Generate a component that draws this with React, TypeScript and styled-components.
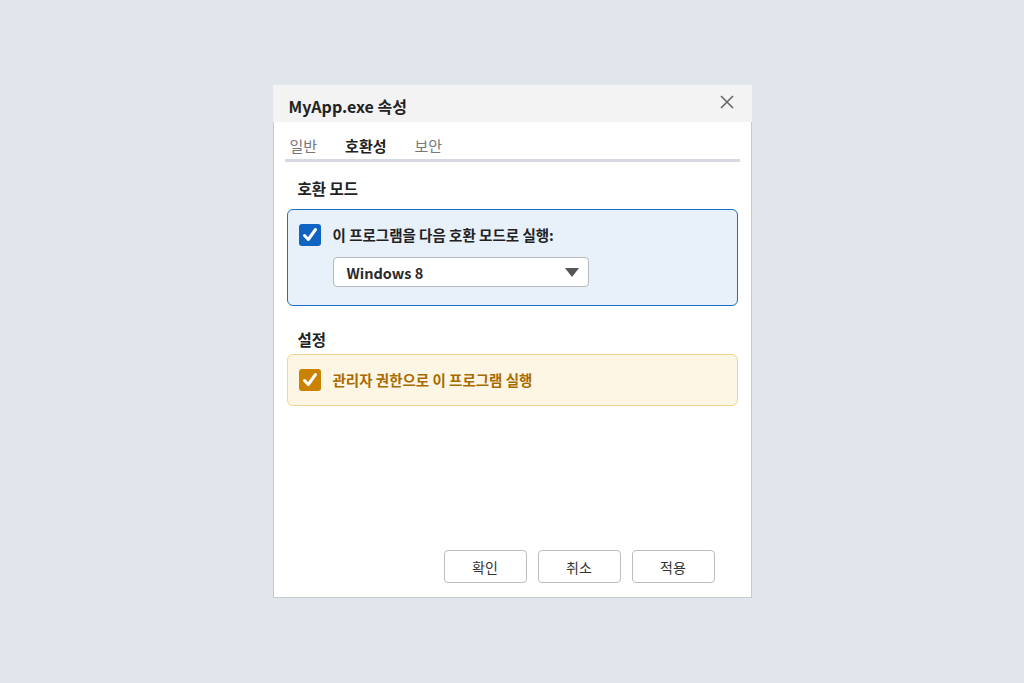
import React from "react";
import styled, { createGlobalStyle } from "styled-components";

const Global = createGlobalStyle`
  html, body { margin: 0; padding: 0; }
  body {
    background: #e1e5ec;
    font-family: "Noto Sans CJK KR", "Noto Sans", sans-serif;
  }
`;

const Page = styled.div`
  width: 1024px;
  height: 683px;
  display: flex;
  align-items: center;
  justify-content: center;
`;

const Dialog = styled.div`
  width: 479px;
  height: 513px;
  display: flex;
  flex-direction: column;
  box-sizing: border-box;
`;

const Header = styled.div`
  height: 37px;
  background: #f3f3f3;
  display: flex;
  align-items: center;
  justify-content: space-between;
  padding: 4px 16px 0 16px;
  box-sizing: border-box;
`;

const Title = styled.div`
  font-size: 16px;
  font-weight: 700;
  color: #222;
  line-height: 20px;
`;

const CloseBtn = styled.div`
  width: 18px;
  height: 18px;
  display: flex;
  align-items: center;
  justify-content: center;
  margin-top: -8px;
`;

const Body = styled.div`
  flex: 1;
  background: #fff;
  border: 1px solid #c9c9c9;
  border-top: none;
  display: flex;
  flex-direction: column;
  padding: 0 13px 14px 13px;
`;

const Tabs = styled.div`
  display: flex;
  gap: 28px;
  border-bottom: 3px solid #d6d9e0;
  padding: 14px 0 3px 5px;
  margin: 0 -2px;
`;

const Tab = styled.div<{ $active?: boolean }>`
  font-size: 15px;
  line-height: 20px;
  font-weight: ${(p) => (p.$active ? 700 : 400)};
  color: ${(p) => (p.$active ? "#222" : "#777")};
`;

const SectionTitle = styled.div<{ $top: number; $bottom: number }>`
  font-size: 15.5px;
  font-weight: 700;
  color: #222;
  line-height: 20px;
  padding-left: 11px;
  margin-top: ${(p) => p.$top}px;
  margin-bottom: ${(p) => p.$bottom}px;
`;

const Box = styled.div<{ $tone: "blue" | "orange" }>`
  border: 1.5px solid ${(p) => (p.$tone === "blue" ? "#1a6fc7" : "#f1d591")};
  background: ${(p) => (p.$tone === "blue" ? "#e8f0fa" : "#fef6e5")};
  border-radius: 6px;
  padding: ${(p) => (p.$tone === "blue" ? "13.5px 11px 18.5px" : "14px 11px")};
  display: flex;
  flex-direction: column;
  gap: 11px;
`;

const Row = styled.div`
  display: flex;
  align-items: center;
  gap: 12px;
`;

const Check = styled.div<{ $color: string }>`
  width: 22px;
  height: 22px;
  border-radius: 3px;
  background: ${(p) => p.$color};
  display: flex;
  align-items: center;
  justify-content: center;
  flex-shrink: 0;
`;

const Label = styled.div<{ $color: string }>`
  font-size: 14.5px;
  font-weight: 700;
  line-height: 22px;
  color: ${(p) => p.$color};
`;

const Select = styled.div`
  margin-left: 34px;
  width: 256px;
  height: 30px;
  box-sizing: border-box;
  background: #fff;
  border: 1px solid #b9b9b9;
  border-radius: 4px;
  display: flex;
  align-items: center;
  justify-content: space-between;
  padding: 2px 9px 0 13px;
  font-size: 14.5px;
  font-weight: 700;
  color: #2a2a2a;
`;

const Footer = styled.div`
  margin-top: auto;
  display: flex;
  justify-content: flex-end;
  gap: 11px;
  padding-right: 23px;
`;

const Button = styled.div`
  width: 83px;
  height: 33px;
  box-sizing: border-box;
  border: 1px solid #bdbdbd;
  border-radius: 4px;
  background: #fff;
  display: flex;
  align-items: center;
  justify-content: center;
  font-size: 14px;
  color: #333;
`;

const CheckMark = () => (
  <svg width="18" height="18" viewBox="0 0 18 18">
    <path
      d="M3.5 9.5 L7.3 13.5 L14.5 3.5"
      fill="none"
      stroke="#fff"
      strokeWidth="3"
      strokeLinecap="round"
      strokeLinejoin="round"
    />
  </svg>
);

export default function App() {
  return (
    <Page>
      <Global />
      <Dialog>
        <Header>
          <Title>MyApp.exe 속성</Title>
          <CloseBtn>
            <svg width="16" height="16" viewBox="0 0 16 16">
              <path d="M2 2 L14 14 M14 2 L2 14" stroke="#666" strokeWidth="1.6" />
            </svg>
          </CloseBtn>
        </Header>
        <Body>
          <Tabs>
            <Tab>일반</Tab>
            <Tab $active>호환성</Tab>
            <Tab>보안</Tab>
          </Tabs>
          <SectionTitle $top={16} $bottom={11}>호환 모드</SectionTitle>
          <Box $tone="blue">
            <Row>
              <Check $color="#0f63c1">
                <CheckMark />
              </Check>
              <Label $color="#222">이 프로그램을 다음 호환 모드로 실행:</Label>
            </Row>
            <Select>
              <span>Windows 8</span>
              <svg width="14" height="9" viewBox="0 0 14 9">
                <path d="M0 0 L14 0 L7 9 Z" fill="#555" />
              </svg>
            </Select>
          </Box>
          <SectionTitle $top={23} $bottom={5}>설정</SectionTitle>
          <Box $tone="orange">
            <Row>
              <Check $color="#c98300">
                <CheckMark />
              </Check>
              <Label $color="#a86b00">관리자 권한으로 이 프로그램 실행</Label>
            </Row>
          </Box>
          <Footer>
            <Button>확인</Button>
            <Button>취소</Button>
            <Button>적용</Button>
          </Footer>
        </Body>
      </Dialog>
    </Page>
  );
}
